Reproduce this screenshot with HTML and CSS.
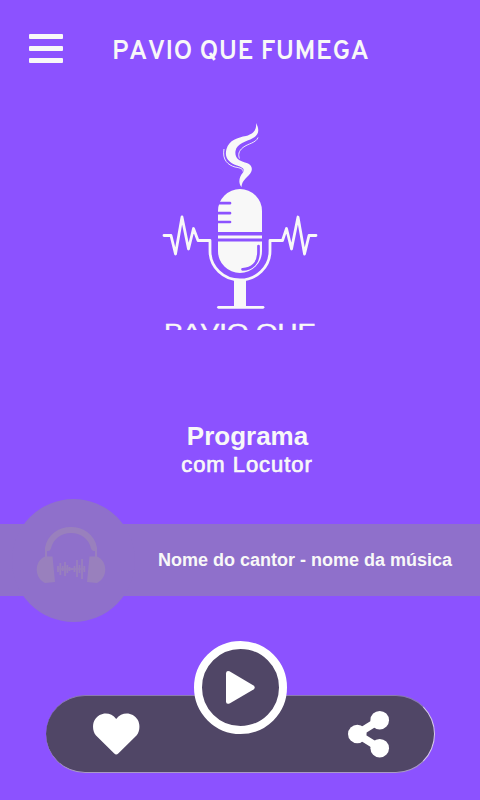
FILE: index.html
```html
<!DOCTYPE html>
<html lang="pt-BR">
<head>
    <meta charset="UTF-8">
    <meta name="viewport" content="width=device-width, initial-scale=1.0">
    <title>Pavio que Fumega</title>
    <link rel="stylesheet" href="styles.css">
</head>
<body>
    <header class="header">
        <button class="menu-btn" aria-label="Menu">
            <span></span>
            <span></span>
            <span></span>
        </button>
        <h1>PAVIO QUE FUMEGA</h1>
    </header>

    <svg class="logo" viewBox="150 110 180 220" role="img" aria-label="Pavio que Fumega">
        <!-- smoke -->
        <path fill="#f8f8f8" d="M256 123C260 130 258.500 135 253 138C246 142 237 143 235.500 151C234.500 158 239 161 245 162.500C253 164.500 253.500 170 249 175C244 180 242 182 241.500 187C238 183 239 177 243 172.500C245 169 243 167.500 237 165.500C227 162 224.500 156 226.500 149C229 140 238 137.500 246 136C253 134 257 130 256 123Z"/>
        <path class="smoke-line" d="M258 137.500C256 143 248 143.500 243 147.500C238.500 151 238 155 239.500 158.500M224 149C222 160 228 165 235 167C241 168 243 169 243 171.500"/>
        <!-- microphone -->
        <path fill="#f8f8f8" d="M218 232V211A22 22 0 0 1 262 211V232ZM218 235.500H262V238.500H218ZM218 241.500H262V251A22 22 0 0 1 240 273A22 22 0 0 1 218 251Z"/>
        <path class="mic-cut" d="M217 203.200H230M217 213.200H230M217 222H230M258.500 246V252C258.500 263 252 269.300 242.500 269.300"/>
        <!-- stand and wave -->
        <path class="wave" d="M164 235.500H171L175.500 254L182 217L188.500 249L193.500 228.500L198 240.500H210V251A30 29 0 0 0 270 251V240.500H282.500L286.500 228.500L291.500 249L298 217L304.500 254L309 235.500H316"/>
        <path fill="#f8f8f8" d="M234 279H246V307H234Z"/>
        <path class="wave" d="M218.500 307.300H263"/>
        <text class="logo-text" x="164" y="338.800" textLength="152" lengthAdjust="spacingAndGlyphs">PAVIO QUE</text>
    </svg>

    <section class="program">
        <h2>Programa</h2>
        <p>com Locutor</p>
    </section>

    <section class="song">
        <div class="cover">
            <svg viewBox="36 524 70 60" width="70" height="60" aria-hidden="true">
                <path d="M48 547C53 523 89 523 94 547" fill="none" stroke="#9980bd" stroke-width="6" stroke-linecap="round"/>
                <path d="M46 547V558M96 547V558" stroke="#9980bd" stroke-width="2"/>
                <path fill="#9980bd" d="M45 555.500H52.500L55 581L45 582C34 577 34 560 45 555.500ZM97 555.500H89.500L87 581L97 582C108 577 108 560 97 555.500Z"/>
                <path d="M58 565V571M60.300 562V574M62.700 565V570M65 561V575M67.300 564V572M69.500 566V570M72 567V569M74.500 565V571M77 559V576M79.500 564V572M82 558V578M84.300 565V571" stroke="#9980bd" stroke-width="1.800"/>
                <path d="M57 568H85" stroke="#9980bd" stroke-width="1.500"/>
            </svg>
        </div>
        <p class="song-title">Nome do cantor - nome da música</p>
    </section>

    <footer class="player">
        <button class="icon-btn" aria-label="Curtir">
            <svg viewBox="92 712 49 44" width="49" height="44">
                <path fill="#fff" d="M116.200 754.500Q115.200 754.500 114 753.300L96 735.500C92.500 731.500 92 724 95 719.500C99.500 712 110.500 711 116.200 719C122 711 133 712 137.500 719.500C140.400 724 140 731.500 136.500 735.500L118.500 753.300Q117.200 754.500 116.200 754.500Z"/>
            </svg>
        </button>
        <button class="play-btn" aria-label="Tocar">
            <svg viewBox="225 669 32 36" width="32" height="36">
                <path fill="#fff" d="M227 672.500Q227 669 230.500 670.300L254.500 684.500Q257 686.500 254.500 688.500L231 702.300Q227 704 227 700.500Z"/>
            </svg>
        </button>
        <button class="icon-btn" aria-label="Compartilhar">
            <svg viewBox="347 710 43 48" width="43" height="48">
                <path d="M379.500 720L357 734L379.500 748" fill="none" stroke="#fff" stroke-width="7.500"/>
                <circle cx="357.300" cy="734" r="9.300" fill="#fff"/>
                <circle cx="379.700" cy="720.200" r="9.300" fill="#fff"/>
                <circle cx="379.700" cy="748.200" r="9.300" fill="#fff"/>
            </svg>
        </button>
    </footer>
</body>
</html>
```

FILE: styles.css
```css
* {
    margin: 0;
    padding: 0;
    box-sizing: border-box;
}

body {
    width: 480px;
    height: 800px;
    display: flex;
    flex-direction: column;
    font-family: "Liberation Sans", Arial, sans-serif;
    background: #8c52ff;
    color: #f8f8f8;
    overflow: hidden;
}

button {
    display: flex;
    border: none;
    background: none;
    cursor: pointer;
}

.header {
    height: 110px;
    padding: 34px 0 0 29px;
    display: flex;
    align-items: flex-start;
    gap: 49px;
}

.menu-btn {
    width: 34px;
    flex-direction: column;
    gap: 7px;
}

.menu-btn span {
    width: 34px;
    height: 5px;
    border-radius: 1px;
    background: #f8f8f8;
}

.header h1 {
    padding-top: 3px;
    font-family: Overpass, Roboto, sans-serif;
    font-size: 26px;
    font-weight: 600;
    line-height: 32px;
    letter-spacing: 0.4px;
    font-kerning: none;
    white-space: nowrap;
}

.logo {
    width: 180px;
    height: 220px;
    margin-left: 150px;
    overflow: hidden;
}

.smoke-line {
    fill: none;
    stroke: #f8f8f8;
    stroke-width: 0.9;
}

.mic-cut {
    fill: none;
    stroke: #8c52ff;
    stroke-width: 2.7;
    stroke-linecap: round;
}

.wave {
    fill: none;
    stroke: #f8f8f8;
    stroke-width: 2.8;
    stroke-linecap: round;
    stroke-linejoin: round;
}

.logo-text {
    font-size: 22px;
    fill: #f8f8f8;
    stroke: #f8f8f8;
    stroke-width: 0.4;
    font-kerning: none;
}

.program {
    margin-top: 90px;
    height: 104px;
    text-align: center;
}

.program h2 {
    padding-left: 15px;
    font-size: 26px;
    line-height: 32px;
}

.program p {
    padding-left: 14px;
    font-size: 22px;
    line-height: 26px;
    letter-spacing: 0.95px;
    -webkit-text-stroke: 0.7px #f8f8f8;
}

.song {
    height: 72px;
    padding-left: 12px;
    display: flex;
    align-items: center;
    gap: 23px;
    background: #8f70cb;
}

.cover {
    width: 123px;
    height: 123px;
    padding: 26px 0 0 24px;
    flex-shrink: 0;
    border-radius: 50%;
    background: #8f70cb;
}

.song-title {
    font-size: 18px;
    font-weight: bold;
    white-space: nowrap;
}

.player {
    width: 389px;
    height: 78px;
    margin: 99px 0 0 46px;
    padding: 0 44px 0 46px;
    display: flex;
    justify-content: space-between;
    align-items: center;
    border-top: 1px solid #8a7bb0;
    border-bottom: 1px solid #a99bc4;
    border-right: 1px solid #d8ccec;
    border-radius: 39px;
    background: #504666;
}

.play-btn {
    width: 93px;
    height: 93px;
    margin: -93px 8px 0 0;
    justify-content: center;
    align-items: center;
    border: 8px solid #fff;
    border-radius: 50%;
    background: #504666;
}
```
